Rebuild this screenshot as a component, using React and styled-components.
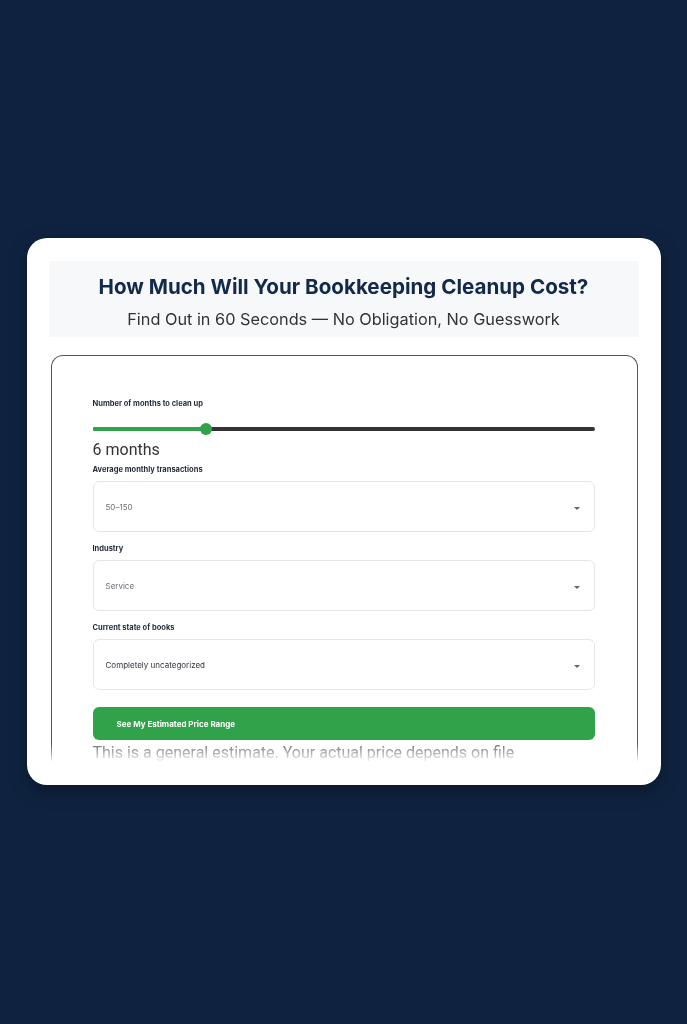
import React from 'react';
import styled, { createGlobalStyle } from 'styled-components';

const GlobalStyle = createGlobalStyle`
    html, body {
        margin: 0;
        padding: 0;
        background: #0f2340;
        font-family: Inter, "Noto Sans", sans-serif;
    }
`;

const Page = styled.div`
    min-height: 1024px;
    padding-top: 238px;
    box-sizing: border-box;
`;

const Card = styled.div`
    width: 634px;
    margin: 0 auto;
    background: #ffffff;
    border-radius: 20px;
    padding: 23px 22px 24px;
    box-sizing: border-box;
    box-shadow: 0 6px 18px rgba(0, 0, 0, 0.35);
`;

const Scroller = styled.div`
    height: 500px;
    overflow: hidden;
    -webkit-mask-image: linear-gradient(to bottom, #000 0, #000 482px, transparent 502px);
    mask-image: linear-gradient(to bottom, #000 0, #000 482px, transparent 502px);
`;

const Header = styled.div`
    background: #f6f8fa;
    height: 76px;
    display: flex;
    flex-direction: column;
    align-items: center;
    justify-content: center;
    gap: 10px;
    padding-top: 5px;
    box-sizing: border-box;
`;

const Title = styled.h1`
    margin: 0;
    font-size: 20.6px;
    font-weight: 700;
    color: #13294b;
    line-height: 24px;
`;

const Subtitle = styled.p`
    margin: 0;
    font-size: 16.3px;
    font-weight: 400;
    color: #333333;
    line-height: 20px;
`;

const FormCard = styled.div`
    margin: 18px 1px 0 2px;
    border: 1.5px solid #555555;
    border-bottom: none;
    border-radius: 12px 12px 0 0;
    padding: 42px 42px 40px 41px;
`;

const Label = styled.div`
    font-size: 7.5px;
    font-weight: 700;
    color: #1f2a3a;
    line-height: 12px;
    margin-bottom: ${p => p.mb || 5}px;
`;

const SliderTrack = styled.div`
    height: 4px;
    border-radius: 2px;
    background: #333333;
    display: flex;
    align-items: center;
`;

const SliderFill = styled.div`
    height: 4px;
    border-radius: 2px 0 0 2px;
    background: #2fa24a;
`;

const SliderThumb = styled.div`
    width: 12px;
    height: 12px;
    border-radius: 50%;
    background: #2fa24a;
    margin-left: -6px;
    flex-shrink: 0;
`;

const MonthsValue = styled.div`
    font-family: Roboto, "Liberation Sans", sans-serif;
    font-size: 16px;
    color: #333333;
    line-height: 19px;
    margin: 9px 0 5px;
`;

const Select = styled.div`
    height: 51px;
    box-sizing: border-box;
    border: 1px solid #e3e5e8;
    border-radius: 6px;
    display: flex;
    align-items: center;
    justify-content: space-between;
    padding: 0 14px 0 12px;
    margin-bottom: 11px;
    font-size: 8px;
    color: ${p => p.dark ? '#2e3440' : '#6b6f76'};
`;

const Caret = styled.span`
    width: 0;
    height: 0;
    border-left: 3.5px solid transparent;
    border-right: 3.5px solid transparent;
    border-top: 3.5px solid #666666;
    margin-top: 3px;
`;

const Button = styled.button`
    display: block;
    width: 100%;
    height: 33px;
    margin: 17px 0 3px;
    border: none;
    border-radius: 6px;
    background: #2fa24a;
    color: #ffffff;
    font-family: Inter, sans-serif;
    font-size: 8px;
    font-weight: 700;
    text-align: left;
    padding: 0 24px;
    cursor: pointer;
`;

const Disclaimer = styled.p`
    margin: 0;
    max-width: 440px;
    font-family: Roboto, "Liberation Sans", sans-serif;
    font-size: 16px;
    line-height: 20px;
    color: #666666;
`;

const fields = [
    { label: 'Average monthly transactions', value: '50–150' },
    { label: 'Industry', value: 'Service' },
    { label: 'Current state of books', value: 'Completely uncategorized', dark: true },
];

export default function App() {
    const months = 6;
    const pct = ((months - 1) / 23) * 100 + 0.8;

    return (
        <>
            <GlobalStyle />
            <Page>
                <Card>
                    <Scroller>
                        <Header>
                            <Title>How Much Will Your Bookkeeping Cleanup Cost?</Title>
                            <Subtitle>Find Out in 60 Seconds — No Obligation, No Guesswork</Subtitle>
                        </Header>
                        <FormCard>
                            <Label mb={17}>Number of months to clean up</Label>
                            <SliderTrack>
                                <SliderFill style={{ width: `${pct}%` }} />
                                <SliderThumb />
                            </SliderTrack>
                            <MonthsValue>{months} months</MonthsValue>
                            {fields.map(f => (
                                <React.Fragment key={f.label}>
                                    <Label>{f.label}</Label>
                                    <Select dark={f.dark}>
                                        <span>{f.value}</span>
                                        <Caret />
                                    </Select>
                                </React.Fragment>
                            ))}
                            <Button>See My Estimated Price Range</Button>
                            <Disclaimer>
                                This is a general estimate. Your actual price depends on file
                                condition, accounts, and complexity.
                            </Disclaimer>
                        </FormCard>
                    </Scroller>
                </Card>
            </Page>
        </>
    );
}
